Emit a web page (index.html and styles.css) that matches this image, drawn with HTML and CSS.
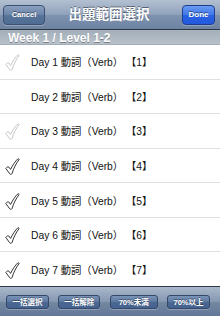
FILE: index.html
```html
<!DOCTYPE html>
<html>
<head>
<meta charset="utf-8">
<link rel="stylesheet" href="styles.css">
</head>
<body>
<div class="screen">
  <div class="navbar">
    <div class="nav-left"><span class="nav-btn cancel">Cancel</span></div>
    <div class="nav-title">出題範囲選択</div>
    <div class="nav-right"><span class="nav-btn done">Done</span></div>
  </div>
  <div class="section">Week 1 / Level 1-2</div>
  <div class="list">
    <div class="row"><span class="check light"><svg viewBox="0 0 15 17" width="15" height="17"><path d="M0.8 10.4 C1.8 9 3 8.6 3.8 9 L5.6 11.4 C7.8 7 10.2 3.2 12.8 0.9 C13.6 0.5 14.4 1 13.9 1.8 C11 5.6 8.6 10.4 7 15.6 C6.6 16.5 5.2 16.5 4.7 15.8 Z"/></svg></span><span class="label">Day 1 動詞（Verb） 【1】</span></div>
    <div class="row"><span class="check"></span><span class="label">Day 2 動詞（Verb） 【2】</span></div>
    <div class="row"><span class="check light"><svg viewBox="0 0 15 17" width="15" height="17"><path d="M0.8 10.4 C1.8 9 3 8.6 3.8 9 L5.6 11.4 C7.8 7 10.2 3.2 12.8 0.9 C13.6 0.5 14.4 1 13.9 1.8 C11 5.6 8.6 10.4 7 15.6 C6.6 16.5 5.2 16.5 4.7 15.8 Z"/></svg></span><span class="label">Day 3 動詞（Verb） 【3】</span></div>
    <div class="row"><span class="check dark"><svg viewBox="0 0 15 17" width="15" height="17"><path d="M0.8 10.4 C1.8 9 3 8.6 3.8 9 L5.6 11.4 C7.8 7 10.2 3.2 12.8 0.9 C13.6 0.5 14.4 1 13.9 1.8 C11 5.6 8.6 10.4 7 15.6 C6.6 16.5 5.2 16.5 4.7 15.8 Z"/></svg></span><span class="label">Day 4 動詞（Verb） 【4】</span></div>
    <div class="row"><span class="check dark"><svg viewBox="0 0 15 17" width="15" height="17"><path d="M0.8 10.4 C1.8 9 3 8.6 3.8 9 L5.6 11.4 C7.8 7 10.2 3.2 12.8 0.9 C13.6 0.5 14.4 1 13.9 1.8 C11 5.6 8.6 10.4 7 15.6 C6.6 16.5 5.2 16.5 4.7 15.8 Z"/></svg></span><span class="label">Day 5 動詞（Verb） 【5】</span></div>
    <div class="row"><span class="check dark"><svg viewBox="0 0 15 17" width="15" height="17"><path d="M0.8 10.4 C1.8 9 3 8.6 3.8 9 L5.6 11.4 C7.8 7 10.2 3.2 12.8 0.9 C13.6 0.5 14.4 1 13.9 1.8 C11 5.6 8.6 10.4 7 15.6 C6.6 16.5 5.2 16.5 4.7 15.8 Z"/></svg></span><span class="label">Day 6 動詞（Verb） 【6】</span></div>
    <div class="row last"><span class="check dark"><svg viewBox="0 0 15 17" width="15" height="17"><path d="M0.8 10.4 C1.8 9 3 8.6 3.8 9 L5.6 11.4 C7.8 7 10.2 3.2 12.8 0.9 C13.6 0.5 14.4 1 13.9 1.8 C11 5.6 8.6 10.4 7 15.6 C6.6 16.5 5.2 16.5 4.7 15.8 Z"/></svg></span><span class="label">Day 7 動詞（Verb） 【7】</span></div>
  </div>
  <div class="toolbar">
    <span class="tb-btn w1">一括選択</span>
    <span class="tb-btn w2">一括解除</span>
    <span class="tb-btn w3">70%未満</span>
    <span class="tb-btn w4">70%以上</span>
  </div>
</div>
</body>
</html>
```
FILE: styles.css
```css
html, body {
  margin: 0;
  padding: 0;
  background: #ffffff;
}
.screen {
  width: 220px;
  height: 316px;
  display: flex;
  flex-direction: column;
  font-family: "Liberation Sans", "Noto Sans CJK JP", sans-serif;
  overflow: hidden;
}
.navbar {
  height: 30px;
  flex: 0 0 30px;
  box-sizing: border-box;
  display: grid;
  grid-template-columns: 1fr auto 1fr;
  align-items: center;
  padding: 0 5px 0 3px;
  background: linear-gradient(#b3c0d1 0%, #90a2bb 50%, #7f93af 51%, #6d83a2 100%);
  border-bottom: 1px solid #2d3642;
}
.nav-left { display: flex; justify-content: flex-start; }
.nav-right { display: flex; justify-content: flex-end; }
.nav-btn {
  height: 20px;
  box-sizing: border-box;
  display: flex;
  align-items: center;
  justify-content: center;
  border-radius: 4px;
  color: #fff;
  font-weight: bold;
  font-size: 7.5px;
  text-shadow: 0 -1px 0 rgba(0,0,0,0.45);
}
.cancel {
  width: 42px;
  background: linear-gradient(#8ca0bf 0%, #6a84a9 50%, #587499 51%, #4f6c93 100%);
  border: 1px solid #3b5275;
  box-shadow: 0 1px 0 rgba(255,255,255,0.25);
}
.done {
  width: 33px;
  font-size: 8px;
  background: linear-gradient(#6b9af0 0%, #3f77ea 50%, #2a62e4 51%, #2359dc 100%);
  border: 1px solid #1d3e93;
  box-shadow: 0 1px 0 rgba(255,255,255,0.25);
}
.nav-title {
  color: #fff;
  font-weight: bold;
  font-size: 13.5px;
  text-shadow: 0 -1px 0 rgba(0,0,0,0.45);
  line-height: 1;
}
.section {
  height: 15px;
  flex: 0 0 15px;
  box-sizing: border-box;
  padding-left: 8px;
  display: flex;
  align-items: center;
  color: #fff;
  font-weight: bold;
  font-size: 12px;
  text-shadow: 0 1px 0 rgba(0,0,0,0.35);
  background: linear-gradient(#a3afba, #b9c2ca);
  border-top: 1px solid #a9b4bd;
  border-bottom: 1px solid #a2adb6;
}
.list {
  flex: 1 1 auto;
  display: flex;
  flex-direction: column;
}
.row {
  flex: 1 1 0;
  display: flex;
  align-items: center;
  border-bottom: 1px solid #e0e0e0;
  box-sizing: border-box;
}
.row.last { border-bottom: none; }
.check {
  width: 15px;
  height: 17px;
  margin-left: 5px;
  margin-right: 11px;
  margin-top: 2px;
  display: flex;
}
.check svg path {
  fill: #fff;
  stroke-width: 0.95;
  stroke-linejoin: round;
}
.check.light svg path { stroke: #c4c4c4; }
.check.dark svg path { stroke: #2a2a2a; }
.label {
  font-size: 10.3px;
  color: #111;
}
.toolbar {
  height: 30px;
  flex: 0 0 30px;
  box-sizing: border-box;
  display: flex;
  align-items: center;
  justify-content: space-between;
  padding: 0 10px 0 6px;
  background: linear-gradient(#aab8cb 0%, #8597b1 50%, #74889f 51%, #63789a 100%);
  border-top: 1px solid #2d3642;
}
.tb-btn {
  height: 14px;
  box-sizing: border-box;
  display: flex;
  align-items: center;
  justify-content: center;
  border-radius: 3px;
  color: #fff;
  font-weight: bold;
  font-size: 7.5px;
  text-shadow: 0 -1px 0 rgba(0,0,0,0.4);
  background: linear-gradient(#7a93b7 0%, #5b77a0 50%, #4b6892 51%, #456290 100%);
  border: 1px solid #34496a;
  box-shadow: 0 1px 0 rgba(255,255,255,0.25);
}
.w1 { width: 43px; }
.w2 { width: 42px; }
.w3 { width: 48px; }
.w4 { width: 43px; }
```
